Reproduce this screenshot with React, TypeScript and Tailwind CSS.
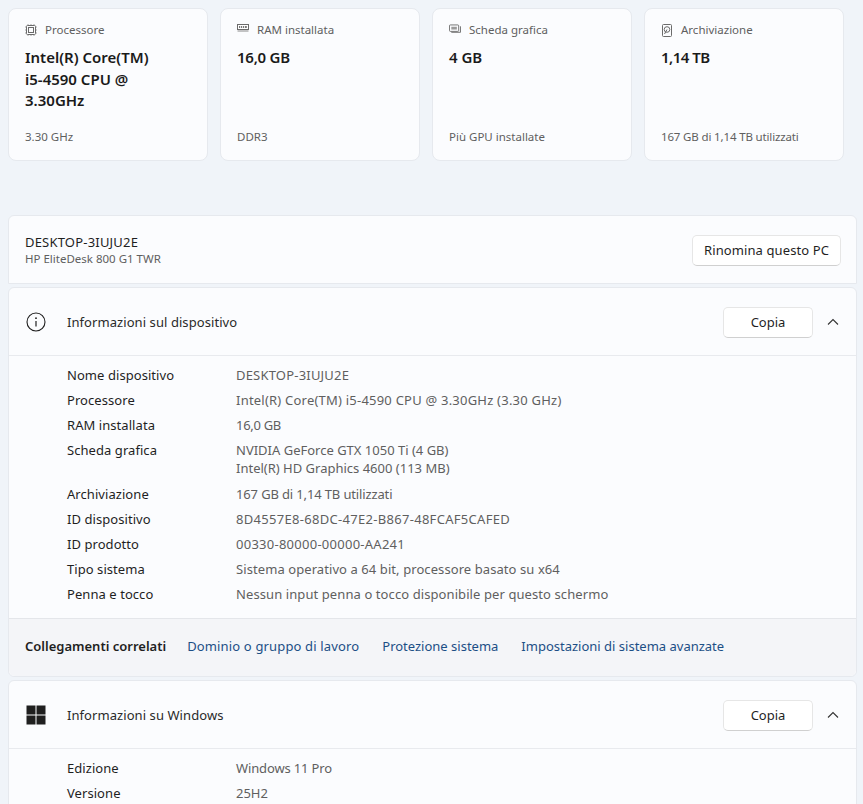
import React from "react";

function CpuIcon() {
  return (
    <svg width="12" height="12" viewBox="0 0 12 12" fill="none" stroke="#6b6b6b" strokeWidth="1">
      <rect x="1.5" y="1.5" width="9" height="9" rx="1" />
      <rect x="3.5" y="3.5" width="5" height="5" />
      <path d="M3 0v1M6 0v1M9 0v1M3 11v1M6 11v1M9 11v1M0 3h1M0 6h1M0 9h1M11 3h1M11 6h1M11 9h1" strokeWidth="0.6" />
    </svg>
  );
}
function RamIcon() {
  return (
    <svg width="12" height="12" viewBox="0 0 12 12" fill="none">
      <rect x="0.5" y="0.5" width="11" height="5" fill="#fff" stroke="#6b6b6b" />
      <path d="M2 2h1.2v2H2zM4 2h1.2v2H4zM6 2h1.2v2H6zM8 2h1.8v2H8z" fill="#777" />
      <path d="M0.5 7h11" stroke="#8a8a8a" />
    </svg>
  );
}
function GpuIcon() {
  return (
    <svg width="13" height="12" viewBox="0 0 13 12" fill="none" stroke="#6b6b6b">
      <rect x="0.5" y="0.5" width="10" height="7" rx="1" />
      <path d="M2.5 2.5h6v3h-6z" fill="#9a9a9a" stroke="none" />
      <path d="M12.5 2v6.5h-10" />
    </svg>
  );
}
function DiskIcon() {
  return (
    <svg width="12" height="13" viewBox="0 0 12 13" fill="none" stroke="#6b6b6b">
      <rect x="1.5" y="0.5" width="9" height="12" rx="1" />
      <circle cx="6" cy="5.5" r="2.8" />
      <path d="M6 5.5 3.5 10" />
    </svg>
  );
}
function InfoIcon() {
  return (
    <svg width="20" height="20" viewBox="0 0 20 20" fill="none" stroke="#1f1f1f">
      <circle cx="10" cy="10" r="9" strokeWidth="1.1" />
      <path d="M10 9v5.5" strokeWidth="1.2" />
      <circle cx="10" cy="6.2" r="0.9" fill="#1f1f1f" stroke="none" />
    </svg>
  );
}
function WinIcon() {
  return (
    <svg width="20" height="20" viewBox="0 0 20 20" fill="#1f1f1f">
      <rect x="0.5" y="0.5" width="9" height="9" />
      <rect x="10.5" y="0.5" width="9" height="9" />
      <rect x="0.5" y="10.5" width="9" height="9" />
      <rect x="10.5" y="10.5" width="9" height="9" />
    </svg>
  );
}
function Chevron() {
  return (
    <svg width="12" height="8" viewBox="0 0 12 8" fill="none" stroke="#333" strokeWidth="1.1">
      <path d="M1 6.5 6 1.5l5 5" />
    </svg>
  );
}

function SummaryCard({ icon, label, value, sub, valueClass = "", subClass = "" }: { icon: React.ReactNode; label: string; value: string; sub: string; valueClass?: string; subClass?: string }) {
  return (
    <div className="w-[200px] h-[153px] flex flex-col rounded-lg border border-[#e6e9ee] bg-[#fbfcfe] pl-4 pr-4 pt-3">
      <div className="flex items-center h-[18px] gap-2 text-[11.5px] text-[#5f5f5f]">
        <span className="w-3 flex justify-center">{icon}</span>
        <span>{label}</span>
      </div>
      <div className={`mt-2 whitespace-pre-line text-[15px] leading-[21.7px] font-semibold text-[#1a1a1a] ${valueClass}`}>{value}</div>
      <div className={`mt-auto mb-[14px] text-[11.5px] leading-[18px] text-[#5f5f5f] ${subClass}`}>{sub}</div>
    </div>
  );
}

function CopyHeader({ icon, title }: { icon: React.ReactNode; title: string }) {
  return (
    <div className="h-[68px] pt-px flex items-center pl-[17px] pr-[17px] border-b border-[#e8eaee]">
      <span className="w-5 flex justify-center">{icon}</span>
      <span className="ml-[21px] mt-[2px] text-[13px] tracking-[0.07px] text-[#2a2a2a]">{title}</span>
      <button className="ml-auto w-[90px] h-[31px] pt-[2px] rounded-[5px] border border-[#e6e6e6] border-b-[#d0d0d0] bg-white text-[13px] text-[#1f1f1f]">Copia</button>
      <span className="ml-[14px] w-3 flex justify-center"><Chevron /></span>
    </div>
  );
}

function Row({ label, value, height = "h-[25px]", valueClass = "" }: { label: string; value: React.ReactNode; height?: string; valueClass?: string }) {
  return (
    <div className={`flex text-[13px] leading-[18px] pl-[58px] pt-[3px] ${height}`}>
      <div className="w-[169px] tracking-[0.06px] text-[#1f1f1f]">{label}</div>
      <div className={`text-[#5f5f5f] ${valueClass}`}>{value}</div>
    </div>
  );
}

export default function App() {
  return (
    <div className="h-[804px] overflow-hidden bg-[#f0f4f9] pl-2 pr-[6px] pt-2" style={{ fontFamily: '"Noto Sans", "Open Sans", sans-serif' }}>
      <div className="flex gap-3">
        <SummaryCard icon={<CpuIcon />} label="Processore" value={"Intel(R) Core(TM)\ni5-4590 CPU @\n3.30GHz"} sub="3.30 GHz" />
        <SummaryCard icon={<RamIcon />} label="RAM installata" value="16,0 GB" sub="DDR3" valueClass="tracking-[-0.25px]" />
        <SummaryCard icon={<GpuIcon />} label="Scheda grafica" value="4 GB" sub="Più GPU installate" />
        <SummaryCard icon={<DiskIcon />} label="Archiviazione" value="1,14 TB" sub="167 GB di 1,14 TB utilizzati" valueClass="tracking-[-0.5px]" subClass="tracking-[-0.15px]" />
      </div>

      <div className="mt-[54px] h-[69px] flex items-center justify-between rounded-t-md border border-[#e6e9ee] bg-[#fbfcfe] pl-4 pr-[15px]">
        <div>
          <div className="text-[13px] leading-[18px] tracking-[0.2px] text-[#1f1f1f]">DESKTOP-3IUJU2E</div>
          <div className="text-[11.5px] leading-[16px] text-[#5f5f5f]">HP EliteDesk 800 G1 TWR</div>
        </div>
        <button className="mt-px w-[149px] h-[31px] pt-[2px] rounded-[5px] border border-[#e6e6e6] border-b-[#d0d0d0] bg-white text-[13px] tracking-[0.1px] text-[#1f1f1f]">Rinomina questo PC</button>
      </div>

      <div className="mt-[3px] rounded-md border border-[#e6e9ee] bg-[#fbfcfe]">
        <CopyHeader icon={<InfoIcon />} title="Informazioni sul dispositivo" />
        <div className="pt-[7px] h-[262px]">
          <Row label="Nome dispositivo" value="DESKTOP-3IUJU2E" valueClass="tracking-[0.2px]" />
          <Row label="Processore" value="Intel(R) Core(TM) i5-4590 CPU @ 3.30GHz (3.30 GHz)" valueClass="tracking-[0.22px]" />
          <Row label="RAM installata" value="16,0 GB" valueClass="tracking-[-0.3px]" />
          <Row label="Scheda grafica" height="h-[44px]" value={<><div>NVIDIA GeForce GTX 1050 Ti (4 GB)</div><div>Intel(R) HD Graphics 4600 (113 MB)</div></>} />
          <Row label="Archiviazione" value="167 GB di 1,14 TB utilizzati" valueClass="tracking-[-0.14px]" />
          <Row label="ID dispositivo" value="8D4557E8-68DC-47E2-B867-48FCAF5CAFED" valueClass="tracking-[0.3px]" />
          <Row label="ID prodotto" value="00330-80000-00000-AA241" valueClass="tracking-[0.26px]" />
          <Row label="Tipo sistema" value="Sistema operativo a 64 bit, processore basato su x64" valueClass="tracking-[0.08px]" />
          <Row label="Penna e tocco" value="Nessun input penna o tocco disponibile per questo schermo" valueClass="tracking-[0.09px]" />
        </div>
        <div className="h-[58px] pb-px flex items-center rounded-b-md border-t border-[#e4e6ea] bg-[#f4f5f8] pl-4 text-[13px]">
          <span className="font-semibold text-[#1f1f1f] mr-[21px] -mt-px">Collegamenti correlati</span>
          <div className="flex gap-[23px] text-[#1c4f86]">
            <span className="tracking-[0.15px]">Dominio o gruppo di lavoro</span>
            <span>Protezione sistema</span>
            <span>Impostazioni di sistema avanzate</span>
          </div>
        </div>
      </div>

      <div className="mt-[3px] rounded-t-md border border-[#e6e9ee] bg-[#fbfcfe]">
        <CopyHeader icon={<WinIcon />} title="Informazioni su Windows" />
        <div className="pt-[7px] pb-4">
          <Row label="Edizione" value="Windows 11 Pro" valueClass="tracking-[-0.14px]" />
          <Row label="Versione" value="25H2" />
        </div>
      </div>
    </div>
  );
}
